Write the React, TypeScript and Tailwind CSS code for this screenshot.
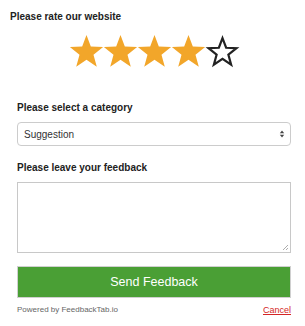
import React from "react";

const Star = ({ filled }: { filled: boolean }) => (
  <svg width="35" height="34" viewBox="0 0 35 34" className="-mx-[0.5px]">
    <polygon
      points="17.5,1 21.82,12.55 34.14,13.09 24.49,20.77 27.79,32.66 17.5,25.85 7.21,32.66 10.51,20.77 0.86,13.09 13.18,12.55"
      fill={filled ? "#f2a62a" : "none"}
      stroke={filled ? "none" : "#222"}
      strokeWidth={filled ? 0 : 2.6}
      strokeLinejoin="miter"
      transform={filled ? undefined : "translate(2.8 3.2) scale(0.84)"}
    />
  </svg>
);

export default function App() {
  return (
    <div
      className="w-[305px] h-[326px] bg-white text-[#333]"
      style={{ fontFamily: '"Liberation Sans", Arial, sans-serif' }}
    >
      <div className="pl-[10px] pt-[10px] text-[10px] font-bold leading-[13px] text-[#222]">
        Please rate our website
      </div>
      <div className="flex justify-center pl-[3px] mt-[11px]">
        {[true, true, true, true, false].map((f, i) => (
          <Star key={i} filled={f} />
        ))}
      </div>
      <div className="px-[17px] pr-[14px]">
        <div className="mt-[33px] text-[10px] font-bold leading-[13px] text-[#222]">
          Please select a category
        </div>
        <div className="mt-[8px] h-[24px] rounded-[4px] border border-[#ccc] flex items-center justify-between pl-[6px] pr-[5px] text-[10px] text-[#333]">
          <span>Suggestion</span>
          <svg width="6" height="10" viewBox="0 0 6 10">
            <polygon points="3,1.5 5.2,4.2 0.8,4.2" fill="#444" />
            <polygon points="3,8.5 5.2,5.8 0.8,5.8" fill="#444" />
          </svg>
        </div>
        <div className="mt-[15px] text-[10px] font-bold leading-[13px] text-[#222]">
          Please leave your feedback
        </div>
        <div className="mt-[8px] h-[71px] border border-[#c8c8c8] relative">
          <svg width="7" height="7" viewBox="0 0 7 7" className="absolute right-[1px] bottom-[1px]">
            <line x1="6" y1="1" x2="1" y2="6" stroke="#999" strokeWidth="0.8" />
            <line x1="6" y1="4" x2="4" y2="6" stroke="#999" strokeWidth="0.8" />
          </svg>
        </div>
        <div className="mt-[13px] h-[32px] bg-[#4a9f35] border border-[#d0d0d0] flex items-center justify-center text-white text-[12.5px]">
          Send Feedback
        </div>
        <div className="mt-[6px] flex justify-between items-center leading-[12px]">
          <span className="text-[8px] text-[#666]">Powered by FeedbackTab.io</span>
          <span className="text-[9px] text-[#d42525] underline">Cancel</span>
        </div>
      </div>
    </div>
  );
}
